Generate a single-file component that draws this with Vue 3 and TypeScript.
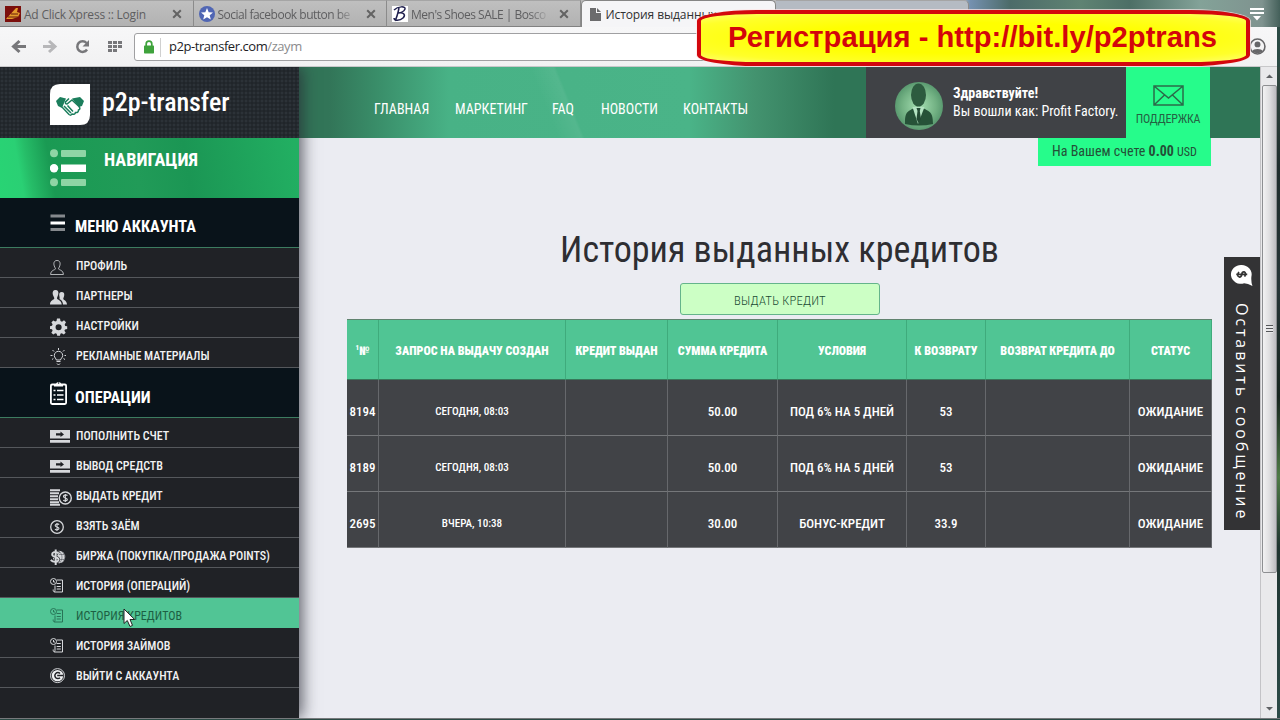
<script setup lang="ts">
interface MenuItem { label: string; icon: string; active?: boolean }

const tabs = [
  { title: 'Ad Click Xpress :: Login', icon: 'acx' },
  { title: 'Social facebook button be', icon: 'star' },
  { title: "Men's Shoes SALE | Bosco", icon: 'script' },
]
const nav = ['ГЛАВНАЯ', 'МАРКЕТИНГ', 'FAQ', 'НОВОСТИ', 'КОНТАКТЫ']
const account: MenuItem[] = [
  { label: 'ПРОФИЛЬ', icon: 'profile' },
  { label: 'ПАРТНЕРЫ', icon: 'partners' },
  { label: 'НАСТРОЙКИ', icon: 'gear' },
  { label: 'РЕКЛАМНЫЕ МАТЕРИАЛЫ', icon: 'bulb' },
]
const operations: MenuItem[] = [
  { label: 'ПОПОЛНИТЬ СЧЕТ', icon: 'money' },
  { label: 'ВЫВОД СРЕДСТВ', icon: 'money' },
  { label: 'ВЫДАТЬ КРЕДИТ', icon: 'coins' },
  { label: 'ВЗЯТЬ ЗАЁМ', icon: 'coin' },
  { label: 'БИРЖА (ПОКУПКА/ПРОДАЖА POINTS)', icon: 'exchange' },
  { label: 'ИСТОРИЯ (ОПЕРАЦИЙ)', icon: 'history' },
  { label: 'ИСТОРИЯ КРЕДИТОВ', icon: 'history', active: true },
  { label: 'ИСТОРИЯ ЗАЙМОВ', icon: 'history' },
  { label: 'ВЫЙТИ С АККАУНТА', icon: 'exit' },
]
const groups = [
  { title: 'МЕНЮ АККАУНТА', icon: 'bars', items: account },
  { title: 'ОПЕРАЦИИ', icon: 'clipboard', items: operations },
]
const columns = ['№', 'ЗАПРОС НА ВЫДАЧУ СОЗДАН', 'КРЕДИТ ВЫДАН', 'СУММА КРЕДИТА', 'УСЛОВИЯ', 'К ВОЗВРАТУ', 'ВОЗВРАТ КРЕДИТА ДО', 'СТАТУС']
const rows = [
  ['8194', 'СЕГОДНЯ, 08:03', '', '50.00', 'ПОД 6% НА 5 ДНЕЙ', '53', '', 'ОЖИДАНИЕ'],
  ['8189', 'СЕГОДНЯ, 08:03', '', '50.00', 'ПОД 6% НА 5 ДНЕЙ', '53', '', 'ОЖИДАНИЕ'],
  ['2695', 'ВЧЕРА, 10:38', '', '30.00', 'БОНУС-КРЕДИТ', '33.9', '', 'ОЖИДАНИЕ'],
]
</script>

<template>
  <div class="window">
    <div class="tabstrip">
      <div v-for="t in tabs" :key="t.icon" class="tab" :class="t.icon">
        <svg class="fav" viewBox="0 0 16 16">
          <template v-if="t.icon === 'acx'">
            <rect width="16" height="16" fill="#7b0f0c" />
            <path d="M1 13 L11 2 L13 2 L12 6 L15 7 L13 11 L7 13 Z" fill="#e59a2c" />
            <path d="M3 11 H13 M6 8 H13" stroke="#6b1a08" stroke-width="1.2" />
          </template>
          <template v-else-if="t.icon === 'star'">
            <circle cx="8" cy="8" r="8" fill="#5066b4" />
            <path d="M8 2 L9.7 6.2 L14 6.5 L10.7 9.3 L11.8 13.6 L8 11.2 L4.2 13.6 L5.3 9.3 L2 6.5 L6.3 6.2 Z" fill="#fff" />
          </template>
          <template v-else>
            <rect width="16" height="16" fill="#fff" />
            <path d="M2 4 C6 0 14 0 13 3 C12 6 8 7 6 7 C12 6 14 9 11 12 C8 15 2 15 2 12 M7 2 C6 7 5 11 3 15" fill="none" stroke="#20204e" stroke-width="1.5" />
          </template>
        </svg>
        <span class="tab-title">{{ t.title }}</span>
        <svg class="close" viewBox="0 0 10 10"><path d="M1.2 1.2 L8.8 8.8 M8.8 1.2 L1.2 8.8" stroke="#636363" stroke-width="2" /></svg>
      </div>
      <div class="tab current">
        <svg class="page-ico" viewBox="0 0 11 13"><path d="M0 0 H6 V5 H11 V13 H0 Z M7 0 L11 4 H7 Z" fill="#6b6b6d" /></svg>
        <span class="tab-title">История выданных</span>
      </div>
      <div class="tab idle"></div>
      <svg class="tabmenu" viewBox="0 0 14 13"><path d="M0 1 H14 M0 5 H14" stroke="#fff" stroke-width="2" /><path d="M3 8 H11 L7 12.5 Z" fill="#fff" /></svg>
    </div>

    <div class="toolbar">
      <svg class="tools" viewBox="0 0 134 39">
        <path d="M19.5 14 L13.5 19.5 L19.5 25 M14 19.5 H26" fill="none" stroke="#77777a" stroke-width="3" />
        <path d="M49 14 L55 19.5 L49 25 M54.500 19.500 H43" fill="none" stroke="#b7b7b9" stroke-width="3" />
        <path d="M86.500 16 A5.300 5.300 0 1 0 87 22.500" fill="none" stroke="#77777a" stroke-width="2.500" />
        <path d="M89 13 V19.500 H82.500 Z" fill="#77777a" />
        <path d="M108 15.500 H122 M108 19.500 H122 M108 23.500 H117" stroke="#77777a" stroke-width="3" stroke-dasharray="4 1" />
      </svg>
      <div class="address">
        <svg class="lock" viewBox="0 0 10 14"><path d="M2.200 7 V4 A2.800 2.800 0 0 1 7.800 4 V7" fill="none" stroke="#3fa33c" stroke-width="1.700" /><rect y="5.500" width="10" height="8" rx="0.700" fill="#3fa33c" /></svg>
        <span class="divider"></span>
        <span class="url">p2p-transfer.com<i>/zaym</i></span>
      </div>
      <svg class="user" viewBox="0 0 16 16"><circle cx="8" cy="8" r="7" fill="none" stroke="#666668" stroke-width="1.500" /><circle cx="8" cy="6" r="2.800" fill="#666668" /><path d="M3 12.500 C4 9.500 12 9.500 13 12.500 C11 15 5 15 3 12.500Z" fill="#666668" /></svg>
    </div>

    <div class="viewport">
      <aside class="sidebar">
        <div class="brand">
          <svg class="mark" viewBox="0 0 40 41">
            <path d="M10 0 H40 V31 Q40 41 30 41 H0 V10 Q0 0 10 0 Z" fill="#fff" />
            <path d="M6 17 L10 13 L16 14.500 L12 24 L8 22 Z M34 17 L30 13 L22 14.500 L29 23 L32 22 Z" fill="#1b7e5c" />
            <path d="M12 23 L19 30.500 Q21 32 22 30 Q25 31 25.500 28.500 Q28.500 29 28.500 26 Q31 25 29 22.500 L22 16 L17 20 Q15 20 15.500 18 L19 14.500" fill="none" stroke="#1b7e5c" stroke-width="1.500" />
            <path d="M14 22 L21 29 M17.500 21.500 L23 27.500" stroke="#1b7e5c" stroke-width="1.500" />
          </svg>
          <span class="brand-name">p2p-transfer</span>
        </div>
        <div class="nav-head">
          <svg class="list-ico" viewBox="0 0 36 38">
            <g fill="#8fd5a5"><circle cx="4" cy="4.300" r="4" /><rect x="11" y="1" width="25" height="7" rx="1" /><circle cx="4" cy="33.200" r="4" /><rect x="11" y="30" width="25" height="7" rx="1" /></g>
            <g fill="#fff"><circle cx="4" cy="19.300" r="4.200" /><rect x="11" y="15.500" width="25" height="7.500" /></g>
          </svg>
          <span>НАВИГАЦИЯ</span>
        </div>
        <template v-for="g in groups" :key="g.title">
          <div class="group-head" :class="g.icon">
            <svg v-if="g.icon === 'bars'" class="group-ico" viewBox="0 0 17 26">
              <path d="M0.500 6 H15 M0.500 19.500 H15" stroke="#85898d" stroke-width="3" /><path d="M0.500 13 H15" stroke="#fff" stroke-width="3" />
            </svg>
            <svg v-else class="group-ico" viewBox="0 0 17 26">
              <rect x="0.900" y="4.500" width="15.200" height="19.500" rx="1.200" fill="none" stroke="#fff" stroke-width="1.800" />
              <path d="M4 6.500 V4 H6 A2.700 2.700 0 0 1 11.200 4 H13 V6.500 Z" fill="#fff" /><circle cx="8.600" cy="3" r="0.800" fill="#09131a" />
              <path d="M3.500 10.500 H5.500 M3.500 15 H5.500 M3.500 19.500 H5.500 M7 10.500 H13.500 M7 15 H13.500 M7 19.500 H13.500" stroke="#fff" stroke-width="1.600" />
            </svg>
            <span>{{ g.title }}</span>
          </div>
          <div v-for="m in g.items" :key="m.label" class="item" :class="{ active: m.active }">
            <svg class="item-ico" viewBox="0 0 24 18" fill="none" stroke="currentColor">
              <g v-if="m.icon === 'profile'" stroke-width="0.800"><path d="M7 2.500 C3.800 2.500 3.400 5.500 4.300 8 C4.800 9.500 5.500 10.300 5.500 11 C5 12 0.700 12 0.600 16.500 H13.400 C13.300 12 9 12 8.500 11 C8.500 10.300 9.200 9.500 9.700 8 C10.600 5.500 10.200 2.500 7 2.500 Z" /></g>
              <g v-else-if="m.icon === 'partners'" fill="currentColor" stroke="none">
                <path d="M5.500 2 C8 2 8.700 4 8.300 6 C8 8 7 9 7 10.500 C7.500 12 11.500 12 11.700 16.500 H0 C0 12 4 12 4.300 10.500 C4.300 9 3 8 2.700 6 C2.500 4 3 2 5.500 2 Z" />
                <path d="M11.500 4 C14 4 14.500 5.500 14.200 7.500 C14 9 13.200 10 13.300 11 C14 12.500 16.800 12.500 17 16.500 H13 C12.800 13 11 12 9.500 11 C10 9 9 8 9.200 6.500 C9.200 5 10 4 11.500 4Z" />
              </g>
              <g v-else-if="m.icon === 'gear'" fill="currentColor" stroke="none"><path fill-rule="evenodd" d="M7 0.500 H10 L10.500 3 L12 3.700 L14 2.300 L16 4.300 L14.700 6.500 L15.200 8 L17.200 8.300 V11 L15 11.500 L14.400 12.700 L15.700 14.800 L13.800 16.500 L11.800 15.200 L10.400 15.800 L10 17.700 H7.200 L6.700 15.700 L5.300 15.200 L3.300 16.500 L1.300 14.700 L2.600 12.700 L2 11.300 L0 11 V8.200 L2 7.800 L2.600 6.200 L1.400 4.400 L3.200 2.400 L5.200 3.600 L6.500 3 Z M8.600 6.200 A3 3 0 1 0 8.600 12.300 A3 3 0 1 0 8.600 6.200 Z" /></g>
              <g v-else-if="m.icon === 'bulb'" stroke-width="1"><path d="M6.300 12 C6.300 10.500 4.300 9.800 4.300 7.500 A4 4 0 0 1 12.700 7.500 C12.700 9.800 10.500 10.500 10.500 12 Z M6.500 13.500 H10.500 M7 15.500 L8.500 17 L10 15.500 M8.500 0 V2 M2.500 2 L4 3.500 M14.500 2 L13 3.500 M0.500 7.500 H2.500 M14.500 7.500 H16 M2 11.500 L3.300 10.600 M15 11.500 L13.500 10.600" /></g>
              <g v-else-if="m.icon === 'money'" stroke="none"><path d="M0 2 H20 V10.500 H0 Z M0 12 H20 V14.700 H0 Z" fill="currentColor" /><path d="M6 5.300 H10.500 V3.500 L14 6.500 L10.500 9 V7.500 H6 Z" fill="#202226" /></g>
              <g v-else-if="m.icon === 'coins'"><path d="M0 2.200 H10 M0 5.200 H9 M0 8.200 H8 M0 11.200 H8 M0 14.200 H9 M0 16.700 H10" stroke-width="2" /><circle cx="15.300" cy="10" r="6" fill="#202226" stroke-width="1.400" /><path d="M17.500 7.500 C15 6 12.500 8 14 9.400 C15 10.200 17.500 10 17.300 11.700 C16.800 13.200 14.500 13 13.200 12.200 M15.300 6 V14" stroke-width="1.200" /></g>
              <g v-else-if="m.icon === 'coin'"><circle cx="7" cy="9" r="6.300" stroke-width="1.300" /><path d="M9.200 6.500 C6.500 5 4.200 7 5.700 8.400 C6.700 9.200 9.200 9 9 10.700 C8.500 12.200 6.200 12 4.900 11.200 M7 5 V13" stroke-width="1.100" /></g>
              <g v-else-if="m.icon === 'exchange'"><circle cx="9" cy="9" r="6.200" fill="currentColor" stroke="none" /><path d="M9 3 C13 7 13 11 9 16 M12 3.500 C16 7 15 12 12 15 M9 6.500 H15 M9 11.500 H15" stroke="#55585e" stroke-width="0.600" /><path d="M8.800 5.500 C6 2.700 1 4 2.500 7.500 C4 9.500 9 8.500 8.500 12 C7.500 15 3 14 0.700 12 M5.700 1.500 V17" stroke="#202226" stroke-width="3.200" /><path d="M8.800 5.500 C6 2.700 1 4 2.500 7.500 C4 9.500 9 8.500 8.500 12 C7.500 15 3 14 0.700 12 M5.700 1.500 V17" stroke-width="2" /></g>
              <g v-else-if="m.icon === 'history'" stroke-width="1"><path d="M6.800 2 H12.500 V14 H5 C3 14 3.200 12.500 3.200 11.500 M5 7.500 V12 C5 13.500 4.500 14 4 13.500 M6.700 5.500 H10.800 M6.700 8.500 H10.800 M6.700 11 H10.800" /><circle cx="3.500" cy="3.500" r="3" /><path d="M3.500 2 V4 H5" /></g>
              <g v-else><circle cx="7.500" cy="7.600" r="7" stroke-width="1" /><circle cx="7.500" cy="7.600" r="5.700" fill="#f0f1f3" stroke="none" /><path d="M10 5.500 A3 3 0 1 0 10 9.700 M7.200 7.500 H13" stroke="#202226" stroke-width="1.500" /></g>
            </svg>
            <span>{{ m.label }}</span>
          </div>
        </template>
      </aside>

      <main class="main">
        <header class="header">
          <nav class="nav"><span v-for="(n, i) in nav" :key="n" :class="'n' + i">{{ n }}</span></nav>
          <div class="profile">
            <svg class="avatar" viewBox="0 0 48 48">
              <defs><radialGradient id="av"><stop offset="0" stop-color="#a5dfb2" /><stop offset="0.700" stop-color="#73b284" /><stop offset="1" stop-color="#5a9a70" /></radialGradient></defs>
              <circle cx="24" cy="24" r="24" fill="url(#av)" />
              <path d="M10 42 C10 30 12 30 19 26 H28 C35 30 38 30 38 42 Q24 45 10 42Z" fill="#265238" />
              <path d="M17.500 25 L23 42 L29.500 25 Z" fill="#b4e3c2" /><path d="M21.500 26 H25.500 L24.800 29 L26 37 L23.500 41 L21.500 37 L22.500 29Z" fill="#234a34" />
              <ellipse cx="23.500" cy="13" rx="7.500" ry="11.500" fill="#2d5b3f" />
            </svg>
            <div class="hello"><b>Здравствуйте!</b><span>Вы вошли как: Profit Factory.</span></div>
          </div>
          <div class="support">
            <svg class="mail" viewBox="0 0 31 21"><path d="M1 1 H30 V20 H1 Z M1 1 L15.500 13 L30 1 M1 20 L11.500 10 M30 20 L19.500 10" fill="none" stroke="#2b6b4a" stroke-width="1.500" /></svg>
            <span>ПОДДЕРЖКА</span>
          </div>
        </header>
        <div class="balance">На Вашем счете <b>0.00</b> <small>USD</small></div>
        <h1>История выданных кредитов</h1>
        <button class="give">ВЫДАТЬ КРЕДИТ</button>
        <div class="table">
          <div class="row head"><span v-for="(c, i) in columns" :key="c"><sup v-if="i === 0">1</sup>{{ c }}</span></div>
          <div v-for="r in rows" :key="r[0]" class="row"><span v-for="(c, i) in r" :key="i">{{ c }}</span></div>
        </div>
      </main>

      <div class="scroll">
        <svg class="arrow" viewBox="0 0 15 18"><path d="M4 11 L7.500 7.500 L11 11 Z" fill="#606265" /></svg>
        <div class="thumb"><i></i></div>
        <svg class="arrow" viewBox="0 0 15 18"><path d="M4 7 L7.500 10.500 L11 7 Z" fill="#606265" /></svg>
      </div>
      <div class="desk"></div>
    </div>

    <div class="message">
      <svg class="bubble" viewBox="0 0 22 22"><path d="M10.500 1 A9.500 9 0 1 0 13 18.500 Q16.500 18.500 21 21 Q19.500 17 20 12 A9.500 9 0 0 0 10.500 1 Z" fill="#fff" /><path d="M8 7.500 Q5.500 11.500 8.500 12.500 Q10.500 12.500 10.800 10 Q11 7.300 13 7.500 Q15.500 8.500 13.500 12 M5.500 10 H16" fill="none" stroke="#333" stroke-width="1.600" /></svg>
      <span>Оставить сообщение</span>
    </div>
    <div class="banner"><span>Регистрация - http://bit.ly/p2ptrans</span></div>
    <svg class="cursor" viewBox="0 0 13 20"><path d="M1 1 V15.500 L4.300 12.500 L7 18.500 L9.500 17.400 L7 11.500 H11.700 Z" fill="#fff" stroke="#222" stroke-width="1" /></svg>
  </div>
</template>

<style>
body { overflow: hidden; }
</style>

<style scoped>
.window { position: relative; width: 1280px; height: 720px; overflow: hidden; display: flex; flex-direction: column; background: #2b4a44; font-family: "Roboto Condensed", Roboto, "Liberation Sans", sans-serif; font-stretch: 75%; }
.window * { box-sizing: border-box; }
svg { display: block; flex: none; }

.tabstrip { height: 27px; flex: none; display: flex; background: linear-gradient(90deg, #b9b9b9 0 960px, #7591b0 970px, #4c6b69 1010px, #5f8373 1080px, #4d6f66 1130px, #83a298 1200px, #7f938f 1262px, #44605a 1280px); font: 12px "Open Sans", "Noto Sans", sans-serif; font-stretch: 100%; }
.tab { width: 193.500px; height: 27px; display: flex; align-items: center; padding: 1px 11px 0 5px; border-right: 1px solid #8b8b8b; border-bottom: 1px solid #818181; border-top: 1px solid #a5a5a5; background: linear-gradient(#bfbfbf, #b2b2b2); color: #5e5e60; }
.fav { width: 16px; height: 16px; }
.tab-title { flex: 1; margin-left: 3px; white-space: nowrap; letter-spacing: -0.22px; }
.star .tab-title, .script .tab-title { letter-spacing: -0.5px; -webkit-mask-image: linear-gradient(90deg, #000 80%, rgba(0, 0, 0, 0.15) 92%); }
.star .close { margin-right: -1px; }
.close { width: 10px; height: 10px; }
.current { background: #f5f5f7; border: 1px solid #858585; border-bottom: 0; border-radius: 5px 5px 0 0; color: #303032; padding-left: 8px; width: 195px; }
.current .tab-title { margin-left: 5px; letter-spacing: -0.1px; }
.page-ico { width: 11px; height: 13px; }
.idle { background: #b5bbc3; border-radius: 0 5px 0 0; }
.tabmenu { width: 14px; height: 13px; margin: 8px 0 0 281px; }

.toolbar { height: 40px; width: 1277px; flex: none; display: flex; align-items: flex-start; background: linear-gradient(#f7f7f8, #f1f1f2); border-bottom: 1px solid #c8c8ca; }
.tools { width: 134px; height: 39px; }
.address { width: 1108px; height: 28px; margin-top: 6px; border: 1px solid #a0a0a2; border-radius: 3px; background: #fff; display: flex; align-items: center; padding-left: 9px; }
.lock { width: 10px; height: 14px; }
.divider { width: 1px; height: 19px; margin: 0 8px 0 6px; background: #d0d0d0; }
.url { font: 13px "Open Sans", "Noto Sans", sans-serif; font-stretch: 100%; color: #1d1d1f; letter-spacing: -0.44px; margin-top: -2px; }
.url i { font-style: normal; color: #8b8b8d; }
.user { width: 17px; height: 17px; margin: 11px 0 0 7px; }

.viewport { flex: none; height: 652px; display: flex; overflow: hidden; border-bottom: 1px solid #77797c; }
.sidebar { width: 299px; flex: none; background: #202226; position: relative; z-index: 1; box-shadow: 3px 0 15px rgba(40, 42, 52, 0.75); }
.brand { height: 71px; display: flex; padding: 17px 0 0 50px; background-color: #24292e; background-image: radial-gradient(#2c3238 30%, transparent 40%), radial-gradient(#20252a 30%, transparent 40%); background-size: 4px 4px; background-position: 0 0, 2px 2px; }
.mark { width: 40px; height: 41px; }
.brand-name { margin-left: 12px; font-size: 26px; line-height: 36px; font-weight: 500; letter-spacing: -0.05px; color: #fff; }
.nav-head { height: 60px; display: flex; padding: 10px 0 0 50px; background: linear-gradient(80deg, #28d474 0, #2ad074 24px, #26bd68 33px, #1a9a53 55px, #219b58 140px, #1b9654 190px, #22af62 299px); color: #fff; font-size: 18.200px; line-height: 23px; font-weight: 700; }
.list-ico { width: 36px; height: 38px; margin: 1px 18px 0 0; }
.group-head { height: 50px; display: flex; padding: 12px 0 0 50px; background: #09131a; border-bottom: 1px solid #3c7c60; color: #fff; font-size: 16.200px; font-weight: 700; line-height: 34px; }
.clipboard { line-height: 36px; }
.group-ico { width: 17px; height: 26px; margin-right: 8px; }
.item { height: 30px; display: flex; padding: 10px 0 0 50px; border-bottom: 1px solid #55585c; color: #f2f2f3; font-size: 12px; font-weight: 500; line-height: 17px; letter-spacing: -0.02px; white-space: nowrap; }
.item-ico { width: 24px; height: 18px; margin-right: 2px; color: #d6d8db; }
.active { background: #51c595; border-bottom-color: #51c595; color: #1d5f43; font-weight: 400; letter-spacing: 0.05px; }
.active .item-ico { color: #287457; }

.main { position: relative; width: 961px; background: #ebecf2; display: flex; flex-direction: column; align-items: center; }
.header { width: 961px; height: 71px; flex: none; display: flex; background: linear-gradient(68deg, transparent 240px, rgba(255,255,255,.06) 262px, transparent 265px), linear-gradient(90deg, #327558 0, #327558 30px, #398c68 75px, #48b286 150px, #4ab488 390px, #43936f 455px, #2f7556 535px, #2f7556 100%); }
.nav { width: 567px; padding: 33px 0 0 75px; display: flex; color: #fff; font-size: 14px; line-height: 18px; white-space: nowrap; }
.n0 { width: 81px; } .n1 { width: 97px; } .n2 { width: 49px; } .n3 { width: 82px; }
.profile { width: 260px; background: #404246; display: flex; padding: 15px 0 0 29px; color: #fff; }
.avatar { width: 48px; height: 48px; }
.hello { margin-left: 10px; padding-top: 2px; display: flex; flex-direction: column; font-size: 14px; line-height: 18px; white-space: nowrap; }
.support { width: 84px; background: #26fc8b; display: flex; flex-direction: column; align-items: center; padding-top: 18px; font-size: 12px; letter-spacing: -0.15px; line-height: 16px; color: #246243; }
.mail { width: 31px; height: 21px; margin-bottom: 5px; }
.balance { align-self: flex-end; margin-right: 49px; width: 173px; height: 28px; background: #26fc8b; color: #245038; font-size: 14px; line-height: 27px; text-align: center; white-space: nowrap; }
.balance small { font-size: 12px; }
h1 { margin: 60px 0 0; font-size: 36.100px; line-height: 48px; font-weight: 400; color: #2e2e32; white-space: nowrap; }
.give { margin: 9px 0 4px 1px; width: 200px; height: 32px; background: #ccffc5; border: 1px solid #64b48b; border-radius: 3px; font: 300 12.700px "Roboto Condensed", Roboto, sans-serif; font-stretch: 75%; letter-spacing: 0.2px; color: #204a34; padding: 2px 0 0; }
.table { width: 865px; color: #fff; }
.row { display: grid; grid-template-columns: 32px 187px 102px 110px 129px 79px 144px 82px; height: 56px; background: #414347; font-size: 13px; font-weight: 500; }
.row span { display: flex; align-items: center; justify-content: center; padding-top: 8px; border-right: 1px solid #66686c; border-bottom: 1px solid #75777a; white-space: nowrap; }
.row span:nth-child(2) { font-size: 11.100px; padding-top: 7px; }
.head { height: 61px; background: #50c594; border-top: 1px solid #60836f; }
.head span, .head span:nth-child(2) { font-size: 12px; font-weight: 900; padding-top: 3px; border-right-color: #3fab7c; border-bottom-color: #37785a; }
sup { font-size: 7px; align-self: flex-start; margin-top: 21px; }

.scroll { width: 17px; border-left: 1px solid #c3c3c6; background: #e9e9eb; display: flex; flex-direction: column; align-items: center; }
.arrow { width: 15px; height: 18px; }
.thumb { width: 15px; height: 488px; flex: none; margin-bottom: 127px; border: 1px solid #8d8f92; border-radius: 2px; background: linear-gradient(90deg, #f2f2f3, #dedee0 50%, #bcbcc0); display: flex; align-items: center; justify-content: center; }
.thumb i { width: 7px; height: 8px; background: repeating-linear-gradient(#55575a 0 1px, #e8e8ea 1px 3px); }
.desk { width: 3px; background: linear-gradient(#314941, #1e2c2c 100px, #263537 220px, #17251f 330px, #4f7b47 410px, #1f3430 480px, #2d4b47); }
.message { position: absolute; z-index: 2; left: 1224px; top: 257px; width: 36px; height: 273px; background: #333335; color: #fff; display: flex; flex-direction: column; align-items: center; padding-top: 7px; }
.bubble { width: 24px; height: 23px; }
.message span { writing-mode: vertical-rl; margin-top: 16px; font: 16px "Open Sans", "Noto Sans", sans-serif; font-stretch: 100%; letter-spacing: 2.900px; white-space: nowrap; }
.banner { position: absolute; z-index: 3; left: 697px; top: 10px; width: 553px; height: 56px; border: 4px solid #d3070d; border-radius: 60px / 11px; background: radial-gradient(ellipse, #ffff00 45%, #ffff2a 80%, #ffff72); box-shadow: 0 0 0 1px rgba(255,230,230,.7); display: flex; align-items: center; justify-content: center; padding: 0 2px 1px 0; font: 700 29.200px "Liberation Sans", sans-serif; font-stretch: 100%; color: #d3060b; white-space: nowrap; }
.cursor { position: absolute; z-index: 4; left: 123px; top: 608px; width: 13px; height: 20px; }
</style>
